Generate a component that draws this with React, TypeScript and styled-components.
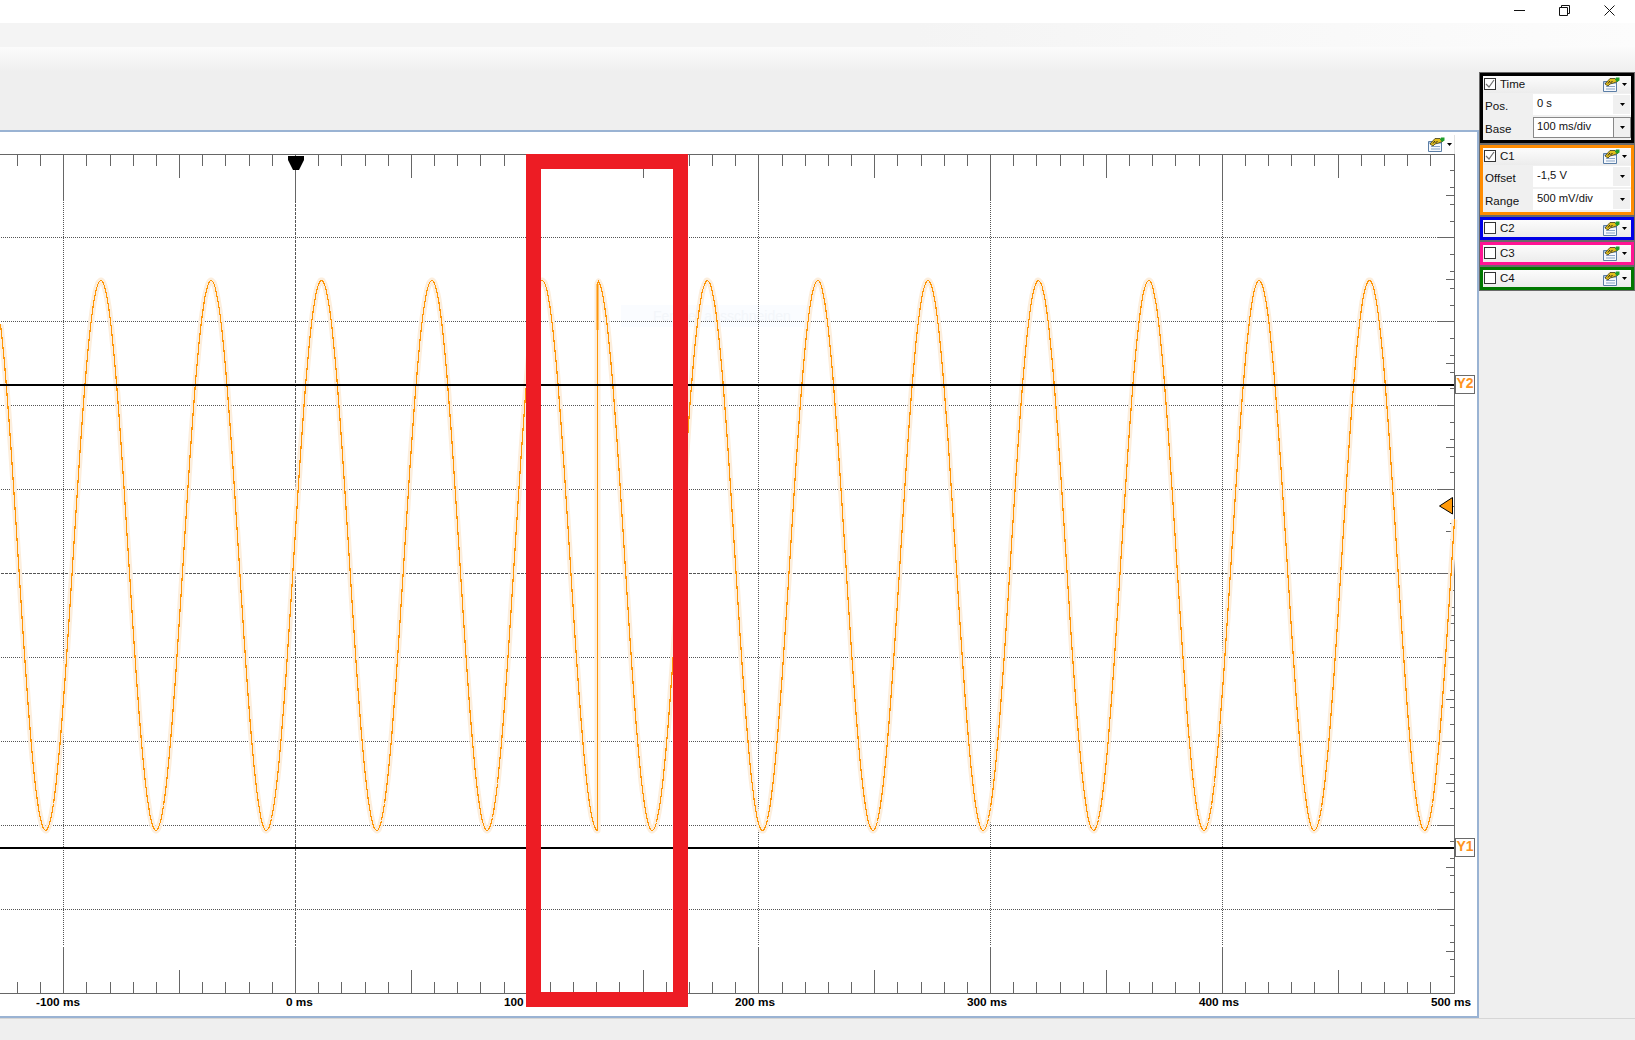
import styled, { createGlobalStyle } from "styled-components";

const GlobalStyle = createGlobalStyle`
  html, body {
    margin: 0;
    padding: 0;
    background: #efefef;
    font-family: "Liberation Sans", Arial, sans-serif;
  }
`;

const Page = styled.div`
  width: 1635px;
  height: 1040px;
  display: flex;
  flex-direction: column;
  overflow: hidden;
  background: #efefef;
`;

const TitleBar = styled.div`
  height: 23px;
  background: #fff;
  display: flex;
  justify-content: flex-end;
  padding-right: 3px;
`;

const WindowButton = styled.div`
  width: 45px;
  height: 20px;
  display: flex;
  align-items: center;
  justify-content: center;
`;

const RibbonTabs = styled.div`
  height: 24px;
  background: linear-gradient(90deg, #f4f4f4 0%, #f4f4f4 56%, #f7f7f7 70%, #fcfcfc 100%);
`;

const Workspace = styled.div`
  flex: 1;
  display: flex;
  min-height: 0;
  background: linear-gradient(180deg, #fbfbfb 0, #efefef 24px);
`;

const PlotColumn = styled.div`
  width: 1479px;
  display: flex;
  flex-direction: column;
  padding-top: 83px;
`;

const PlotPanel = styled.div`
  position: relative;
  height: 888px;
  box-sizing: border-box;
  background: #fff;
  border-top: 2px solid #9ab3d3;
  border-right: 2px solid #9ab3d3;
  border-bottom: 2px solid #9ab3d3;
  overflow: hidden;
`;

const PlotSvg = styled.svg`
  display: block;
`;

const AxisLabel = styled.text`
  font-family: "Liberation Sans", Arial, sans-serif;
  font-size: 11.8px;
  font-weight: 700;
  fill: #000;
`;

const Watermark = styled.text`
  font-family: "Liberation Sans", Arial, sans-serif;
  font-size: 14px;
  fill: #f3f6fa;
`;

const PlotMenu = styled.div`
  position: absolute;
  left: 1428px;
  top: 3px;
  height: 19px;
  width: 26px;
  display: flex;
  align-items: center;
  gap: 1px;
  border-right: 1px solid #e2e2e2;
`;

const CursorTag = styled.div<{ $top: number }>`
  position: absolute;
  left: 1455px;
  top: ${(p) => p.$top}px;
  width: 20px;
  height: 19px;
  box-sizing: border-box;
  border: 1px solid #6a6a6a;
  background: #fff;
  color: #ff9422;
  font-size: 14px;
  font-weight: 700;
  line-height: 15px;
  text-align: center;
`;

const Marquee = styled.div`
  position: absolute;
  left: 526px;
  top: 22px;
  width: 162px;
  height: 853px;
  box-sizing: border-box;
  border: 15px solid #ed1c24;
`;

const Sidebar = styled.div`
  width: 156px;
  padding-top: 25px;
  display: flex;
  flex-direction: column;
`;

const Channel = styled.div`
  border: 1px solid #6a6a6a;
`;

const ChannelBody = styled.div<{ $color: string }>`
  border: 3px solid ${(p) => p.$color};
  background: #f0f0f0;
  display: flex;
  flex-direction: column;
`;

const ChannelHeader = styled.div`
  height: 17px;
  display: flex;
  align-items: center;
  padding: 0 4px 1px 1px;
  box-sizing: border-box;
  background: linear-gradient(180deg, #fcfcfc, #ececec);
  color: #111;
`;

const CheckBox = styled.span`
  width: 12px;
  height: 12px;
  box-sizing: border-box;
  border: 1px solid #333;
  background: #fff;
  display: flex;
  align-items: center;
  justify-content: center;
  margin-right: 4px;
`;

const ChannelName = styled.span`
  flex: 1;
  font-size: 11.5px;
`;

const MenuIcon = styled.span`
  display: flex;
  align-items: center;
  gap: 1px;
`;

const FieldList = styled.div`
  display: flex;
  flex-direction: column;
  gap: 2px;
  padding: 1px 0 2px;
`;

const FieldRow = styled.div`
  height: 21px;
  display: grid;
  grid-template-columns: 50px 1fr;
  align-items: center;
`;

const FieldLabel = styled.label`
  padding: 1px 0 0 2px;
  font-size: 11.6px;
  color: #111;
`;

const ComboBox = styled.div<{ $focused?: boolean }>`
  height: 21px;
  box-sizing: border-box;
  display: flex;
  background: #fff;
  border: 1px solid ${(p) => (p.$focused ? "#888" : "#fff")};
`;

const ComboValue = styled.span`
  flex: 1;
  padding-left: 3px;
  font-size: 11.2px;
  line-height: 17px;
  color: #111;
`;

const ComboArrow = styled.span<{ $focused?: boolean }>`
  width: 16px;
  background: #f0f0f0;
  display: flex;
  align-items: center;
  justify-content: center;
  border-left: 1px solid ${(p) => (p.$focused ? "#888" : "#f0f0f0")};
`;

const StatusBar = styled.div`
  height: 21px;
  border-top: 1px solid #d6d6d6;
  background: #efefef;
`;

// plot geometry, in page pixels
const ZERO_X = 295.5;
const MS100 = 231.7;
const TICK = MS100 / 10;
const RIGHT = 1454;
const TOP = 154;
const BOTTOM = 993;
const DIV_Y = (BOTTOM - TOP) / 10;
const CENTER = 555.5;
const AMP = 275;
const PERIOD = 110.35;
const GLITCH_X = 597.5;

const crisp = (v: number) => Math.round(v) + 0.5;

function tracePoints() {
  const pts: string[] = [];
  for (let x = 0; x <= RIGHT; x += 1) {
    // phase slips at the glitch: the wave restarts from its crest
    const peak = x < GLITCH_X ? 100.3 : GLITCH_X - 1;
    const y = CENTER - AMP * Math.cos((2 * Math.PI * (x - peak)) / PERIOD);
    if (x === Math.ceil(GLITCH_X)) {
      pts.push(`${GLITCH_X},${CENTER + AMP}`);
      pts.push(`${GLITCH_X},${CENTER - AMP + 3}`);
    }
    pts.push(`${x + 0.5},${Math.floor(y) + 0.5}`);
  }
  return pts.join(" ");
}

const TIME_LABELS = [
  { x: 36, text: "-100 ms" },
  { x: 286, text: "0 ms" },
  { x: 504, text: "100 ms" },
  { x: 735, text: "200 ms" },
  { x: 967, text: "300 ms" },
  { x: 1199, text: "400 ms" },
  { x: 1431, text: "500 ms" },
];

function PlotCanvas() {
  const xTicks: number[] = [];
  for (let i = -12; ZERO_X + i * TICK <= RIGHT + 1; i++) xTicks.push(i);
  const yTicks: number[] = [];
  for (let i = 0; i <= 50; i++) yTicks.push(i);
  const ink = "#666";
  const trace = tracePoints();

  return (
    <PlotSvg width={1477} height={884} viewBox="0 132 1477 884">
      <rect x={621} y={305} width={190} height={22} fill="#fafcff" />
      <Watermark x={653} y={321}>Fenster ausschneiden</Watermark>

      {/* grid */}
      {[1, 2, 3, 4, 5, 6, 7, 8, 9].map((n) => {
        const y = crisp(TOP + n * DIV_Y - 0.5);
        return (
          <line key={n} x1={1} x2={1437} y1={y} y2={y} stroke="#555"
            strokeDasharray={n === 5 ? "3 1" : "1 1"} />
        );
      })}
      {xTicks.filter((i) => i % 10 === 0 && i > -12 && i < 50).map((i) => {
        const x = crisp(ZERO_X + i * TICK - 0.5);
        return (
          <line key={i} x1={x} x2={x} y1={200} y2={946} stroke="#555"
            strokeDasharray={i === 0 ? "3 1" : "1 1"} />
        );
      })}

      {/* axes and ticks */}
      <line x1={0} x2={RIGHT} y1={154.5} y2={154.5} stroke={ink} />
      <line x1={0} x2={RIGHT} y1={993.5} y2={993.5} stroke={ink} />
      <line x1={RIGHT + 0.5} x2={RIGHT + 0.5} y1={154} y2={994} stroke={ink} />
      {xTicks.map((i) => {
        const x = crisp(ZERO_X + i * TICK - 0.5);
        const len = i % 10 === 0 ? 46 : i % 5 === 0 ? 23 : 11;
        return (
          <g key={i} stroke={ink}>
            <line x1={x} x2={x} y1={155} y2={155 + len} />
            <line x1={x} x2={x} y1={993} y2={993 - len} />
          </g>
        );
      })}
      {yTicks.map((i) => {
        const y = crisp(TOP + (i * DIV_Y) / 5 - 0.5);
        const len = i % 5 === 0 ? 17 : 4;
        return <line key={i} x1={RIGHT} x2={RIGHT - len} y1={y} y2={y} stroke={ink} />;
      })}
      {[0.5, 1.5, 2.5, 3.5, 4.5, 5.5, 6.5, 7.5, 8.5, 9.5].map((n) => {
        const y = crisp(TOP + n * DIV_Y - 0.5);
        return <line key={n} x1={RIGHT} x2={RIGHT - 8} y1={y} y2={y} stroke={ink} />;
      })}

      {/* trace */}
      <polyline points={trace} fill="none" stroke="#fceedd" strokeWidth={6} strokeLinejoin="round" />
      <polyline points={trace} fill="none" stroke="#ff9505" strokeWidth={1.2} shapeRendering="crispEdges" />
      <line x1={GLITCH_X} x2={GLITCH_X} y1={284} y2={330} stroke="#ff9505" strokeWidth={2} />

      {/* cursors */}
      <rect x={0} y={384} width={RIGHT} height={2} fill="#000" />
      <rect x={0} y={847} width={RIGHT} height={2} fill="#000" />

      {/* trigger + offset markers */}
      <polygon points="288,156 304,156 304,160 299,170 293,170 288,160" fill="#000" />
      <polygon points="1439.5,506 1452.5,497.5 1452.5,514" fill="#ff9a0a" stroke="#000" />

      {TIME_LABELS.map((l) => (
        <AxisLabel key={l.text} x={l.x} y={1006}>{l.text}</AxisLabel>
      ))}
    </PlotSvg>
  );
}

function ToolIcon() {
  return (
    <svg width={18} height={15} viewBox="0 0 18 15">
      <path d="M.5 4.5h13v10H.5z" fill="#f5f8fc" stroke="#5b7ea6" />
      <path d="M1 5h12v2H1z" fill="#a9c2e0" />
      <path d="M3 9.5h9M3 12h9" stroke="#8aa5c6" />
      <path d="M2 7l5-5.5h5l2.5 3-4 1.5-3.5 1-2 2z" fill="#e3bf1c" stroke="#3c3a18" strokeWidth={0.8} />
      <path d="M5 6.5l2-2.5M7.5 6l2-2" stroke="#222" />
      <path d="M13 .5h3.5v3l-2.5 1.5-2-2.5z" fill="#1f9e2a" />
    </svg>
  );
}

function Caret() {
  return (
    <svg width={5} height={3} viewBox="0 0 5 3">
      <path d="M0 0h5L2.5 3z" fill="#000" />
    </svg>
  );
}

function Check() {
  return (
    <svg width={10} height={10} viewBox="0 0 10 10">
      <path d="M1 5l3 3 5-7" fill="none" stroke="#707070" strokeWidth={1.2} />
    </svg>
  );
}

interface FieldProps {
  label: string;
  value: string;
  focused?: boolean;
}

function Field({ label, value, focused }: FieldProps) {
  return (
    <FieldRow>
      <FieldLabel>{label}</FieldLabel>
      <ComboBox $focused={focused}>
        <ComboValue>{value}</ComboValue>
        <ComboArrow $focused={focused}><Caret /></ComboArrow>
      </ComboBox>
    </FieldRow>
  );
}

interface ChannelBoxProps {
  name: string;
  color: string;
  checked?: boolean;
  fields?: FieldProps[];
}

function ChannelBox({ name, color, checked, fields }: ChannelBoxProps) {
  return (
    <Channel>
      <ChannelBody $color={color}>
        <ChannelHeader>
          <CheckBox>{checked && <Check />}</CheckBox>
          <ChannelName>{name}</ChannelName>
          <MenuIcon><ToolIcon /><Caret /></MenuIcon>
        </ChannelHeader>
        {fields && (
          <FieldList>
            {fields.map((f) => <Field key={f.label} {...f} />)}
          </FieldList>
        )}
      </ChannelBody>
    </Channel>
  );
}

export default function App() {
  return (
    <Page>
      <GlobalStyle />
      <TitleBar>
        <WindowButton>
          <svg width={11} height={11} viewBox="0 0 11 11"><path d="M0 5.5h11" stroke="#111" /></svg>
        </WindowButton>
        <WindowButton>
          <svg width={11} height={11} viewBox="0 0 11 11">
            <path d="M.5 2.5h8v8h-8zM2.5 2.5v-2h8v8h-2" fill="none" stroke="#111" />
          </svg>
        </WindowButton>
        <WindowButton>
          <svg width={11} height={11} viewBox="0 0 11 11"><path d="M.5.5l10 10M10.5.5l-10 10" stroke="#111" /></svg>
        </WindowButton>
      </TitleBar>
      <RibbonTabs />
      <Workspace>
        <PlotColumn>
          <PlotPanel>
            <PlotCanvas />
            <PlotMenu><ToolIcon /><Caret /></PlotMenu>
            <CursorTag $top={243}>Y2</CursorTag>
            <CursorTag $top={706}>Y1</CursorTag>
            <Marquee />
          </PlotPanel>
        </PlotColumn>
        <Sidebar>
          <ChannelBox
            name="Time"
            color="#000"
            checked
            fields={[
              { label: "Pos.", value: "0 s" },
              { label: "Base", value: "100 ms/div", focused: true },
            ]}
          />
          <ChannelBox
            name="C1"
            color="#ff8c00"
            checked
            fields={[
              { label: "Offset", value: "-1,5 V" },
              { label: "Range", value: "500 mV/div" },
            ]}
          />
          <ChannelBox name="C2" color="#0000e6" />
          <ChannelBox name="C3" color="#ff1493" />
          <ChannelBox name="C4" color="#007800" />
        </Sidebar>
      </Workspace>
      <StatusBar />
    </Page>
  );
}
